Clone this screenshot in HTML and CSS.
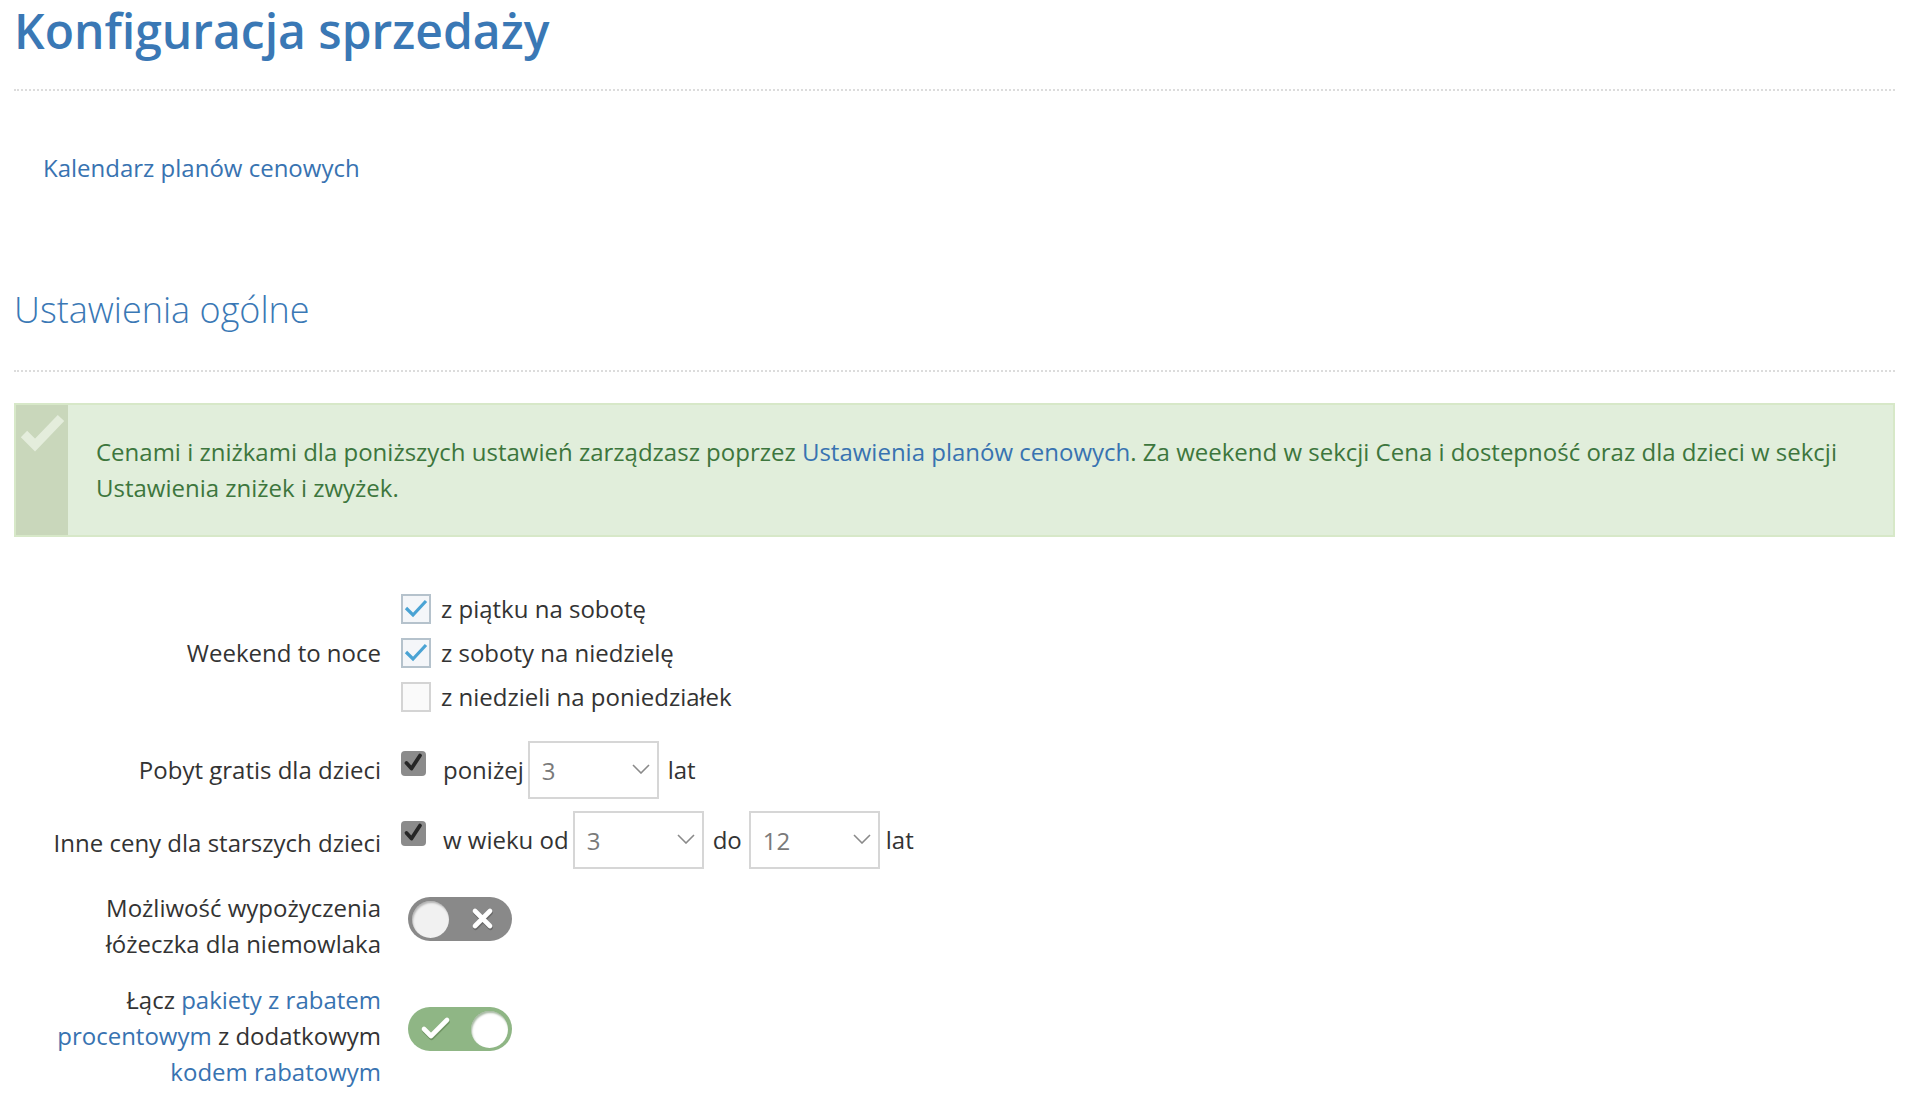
FILE: index.html
```html
<!DOCTYPE html>
<html lang="pl">
<head>
<meta charset="utf-8">
<title>Konfiguracja sprzedaży</title>
<link rel="stylesheet" href="styles.css">
</head>
<body>
<div class="page">
  <h1 class="title">Konfiguracja sprzedaży</h1>
  <hr class="rule rule-top">
  <nav class="subnav"><a href="#" class="link">Kalendarz planów cenowych</a></nav>
  <h2 class="section">Ustawienia ogólne</h2>
  <hr class="rule rule-section">

  <div class="alert">
    <div class="alert-strip">
      <svg class="alert-icon" width="52" height="56" viewBox="0 0 52 56"><polyline points="8,29 19,40 45,13" fill="none" stroke="#e4eddc" stroke-width="9"/></svg>
    </div>
    <p class="alert-text">Cenami i zniżkami dla poniższych ustawień zarządzasz poprzez <a href="#" class="link">Ustawienia planów cenowych</a>. Za weekend w sekcji Cena i dostepność oraz dla dzieci w sekcji Ustawienia zniżek i zwyżek.</p>
  </div>

  <div class="form">
    <div class="row row-weekend">
      <div class="label">Weekend to noce</div>
      <div class="options">
        <div class="option"><span class="cb cb-on"><svg width="26" height="26" viewBox="0 0 26 26"><polyline points="3,12 10,19 23,5" fill="none" stroke="#4aa3d4" stroke-width="3.2"/></svg></span><span>z piątku na sobotę</span></div>
        <div class="option"><span class="cb cb-on"><svg width="26" height="26" viewBox="0 0 26 26"><polyline points="3,12 10,19 23,5" fill="none" stroke="#4aa3d4" stroke-width="3.2"/></svg></span><span>z soboty na niedzielę</span></div>
        <div class="option"><span class="cb cb-off"></span><span>z niedzieli na poniedziałek</span></div>
      </div>
    </div>

    <div class="row row-kids">
      <div class="label">Pobyt gratis dla dzieci</div>
      <div class="controls">
        <span class="dcb"><svg width="25" height="25" viewBox="0 0 25 25"><polyline points="5.5,12 10.5,17.5 19,4.5" fill="none" stroke="#262626" stroke-width="3.8" stroke-linecap="round" stroke-linejoin="round"/></svg></span>
        <span class="ctext ctext-first">poniżej</span>
        <div class="select"><span class="value">3</span><svg class="chev" width="18" height="10" viewBox="0 0 18 10"><polyline points="1,1 9,9 17,1" fill="none" stroke="#8a8a8a" stroke-width="1.6"/></svg></div>
        <span class="ctext ctext-after">lat</span>
      </div>
    </div>

    <div class="row row-older">
      <div class="label">Inne ceny dla starszych dzieci</div>
      <div class="controls">
        <span class="dcb"><svg width="25" height="25" viewBox="0 0 25 25"><polyline points="5.5,12 10.5,17.5 19,4.5" fill="none" stroke="#262626" stroke-width="3.8" stroke-linecap="round" stroke-linejoin="round"/></svg></span>
        <span class="ctext ctext-first">w wieku od</span>
        <div class="select"><span class="value">3</span><svg class="chev" width="18" height="10" viewBox="0 0 18 10"><polyline points="1,1 9,9 17,1" fill="none" stroke="#8a8a8a" stroke-width="1.6"/></svg></div>
        <span class="ctext ctext-mid">do</span>
        <div class="select"><span class="value">12</span><svg class="chev" width="18" height="10" viewBox="0 0 18 10"><polyline points="1,1 9,9 17,1" fill="none" stroke="#8a8a8a" stroke-width="1.6"/></svg></div>
        <span class="ctext ctext-end">lat</span>
      </div>
    </div>

    <div class="row row-cot">
      <div class="label">Możliwość wypożyczenia łóżeczka dla niemowlaka</div>
      <div class="toggle toggle-off">
        <span class="knob"></span>
        <svg class="toggle-icon" width="24" height="24" viewBox="0 0 24 24"><g stroke-linecap="round" stroke-width="4.6" fill="none"><path d="M4 5 L19 20 M19 5 L4 20" stroke="#6a6a6a" transform="translate(0.5,0.8)"/><path d="M4 4 L19 19 M19 4 L4 19" stroke="#ffffff"/></g></svg>
      </div>
    </div>

    <div class="row row-combine">
      <div class="label">Łącz <a href="#" class="link">pakiety z rabatem</a> <a href="#" class="link">procentowym</a> z dodatkowym <a href="#" class="link">kodem rabatowym</a></div>
      <div class="toggle toggle-on">
        <svg class="toggle-icon" width="32" height="26" viewBox="0 0 32 26"><g stroke-linecap="round" stroke-linejoin="round" stroke-width="4.6" fill="none"><polyline points="4,14 11,21 27,5" stroke="#6f9464" transform="translate(0.5,0.8)"/><polyline points="4,13 11,20 27,4" stroke="#ffffff"/></g></svg>
        <span class="knob"></span>
      </div>
    </div>
  </div>
</div>
</body>
</html>
```

FILE: styles.css
```css
html, body {
  margin: 0;
  padding: 0;
  background: #ffffff;
}

body {
  font-family: "Open Sans", "Noto Sans", "Liberation Sans", sans-serif;
  font-size: 24px;
  line-height: 36px;
  color: #333333;
}

.page {
  padding: 2px 17px 0 14px;
}

.link {
  color: #3873b1;
  text-decoration: none;
}

.title {
  margin: 0;
  font-size: 48px;
  line-height: 58px;
  font-weight: 600;
  color: #3a78b5;
}

.rule {
  height: 0;
  border: 0;
  border-top: 2px dotted #dcdcdc;
  margin: 0;
}

.rule-top {
  margin-top: 29px;
}

.subnav {
  margin-top: 59px;
  padding-left: 29px;
  line-height: 36px;
}

.section {
  margin: 100px 0 0;
  font-size: 36px;
  line-height: 48px;
  font-weight: 300;
  color: #3a78b5;
}

.rule-section {
  margin-top: 36px;
}

.alert {
  margin-top: 31px;
  display: flex;
  border: 2px solid #d7e8c8;
  background: #e1eedb;
}

.alert-strip {
  flex: 0 0 52px;
  background: #c9d7bb;
}

.alert-icon {
  display: block;
}

.alert-text {
  margin: 0;
  padding: 29px 29px 29px 28px;
  color: #3d763d;
  line-height: 36px;
}

.form {
  margin-top: 50px;
}

.row {
  display: flex;
  align-items: center;
}

.label {
  flex: 0 0 367px;
  text-align: right;
  margin-right: 20px;
}

.options {
  display: flex;
  flex-direction: column;
}

.option {
  display: flex;
  align-items: center;
  height: 44px;
}

.cb {
  box-sizing: border-box;
  width: 30px;
  height: 30px;
  margin-right: 10px;
  display: flex;
  align-items: center;
  justify-content: center;
}

.cb-on {
  border: 2px solid #b5c2cc;
  background: #f4f6f9;
}

.cb-off {
  border: 2px solid #d4d4d4;
  background: #fafafa;
}

.row-kids {
  margin-top: 22px;
}

.row-older {
  margin-top: 12px;
}

.row-older .label {
  padding-top: 6px;
}

.controls {
  display: flex;
  align-items: center;
}

.dcb {
  align-self: flex-start;
  margin-top: 10px;
  width: 25px;
  height: 25px;
  border-radius: 4px;
  background: #8b8b8b;
  display: flex;
}

.ctext {
  line-height: 36px;
}

.ctext-first {
  margin-left: 17px;
  margin-right: 4px;
}

.ctext-mid {
  margin: 0 7px 0 9px;
}

.ctext-after {
  margin-left: 9px;
}

.ctext-end {
  margin-left: 6px;
}

.select {
  box-sizing: border-box;
  width: 131px;
  height: 58px;
  border: 2px solid #d6d6d6;
  background: #ffffff;
  display: flex;
  align-items: center;
  justify-content: space-between;
  padding: 0 7px 0 12px;
}

.value {
  color: #7a7a7a;
  line-height: 36px;
  margin-top: 2px;
}

.chev {
  display: block;
  margin-top: -2px;
}

.row-cot {
  margin-top: 21px;
  align-items: flex-start;
}

.row-combine {
  margin-top: 20px;
  align-items: flex-start;
}

.toggle {
  box-sizing: border-box;
  width: 104px;
  height: 44px;
  border-radius: 22px;
  margin-left: 7px;
  display: flex;
  align-items: center;
  padding: 0 4px;
}

.row-cot .toggle {
  margin-top: 7px;
}

.row-combine .toggle {
  margin-top: 25px;
}

.toggle-off {
  background: #898989;
  justify-content: space-between;
  padding-right: 17px;
}

.toggle-on {
  background: #8fb685;
  justify-content: space-between;
  padding-left: 12px;
  padding-right: 4px;
}

.knob {
  width: 37px;
  height: 37px;
  border-radius: 50%;
  box-sizing: border-box;
}

.toggle-off .knob {
  background: #f1f1f1;
  box-shadow: inset 1px 2px 2px rgba(0, 0, 0, 0.25);
}

.toggle-on .knob {
  background: #ffffff;
  box-shadow: inset 1px 2px 2px rgba(60, 100, 50, 0.45);
}

.toggle-icon {
  display: block;
}
```
